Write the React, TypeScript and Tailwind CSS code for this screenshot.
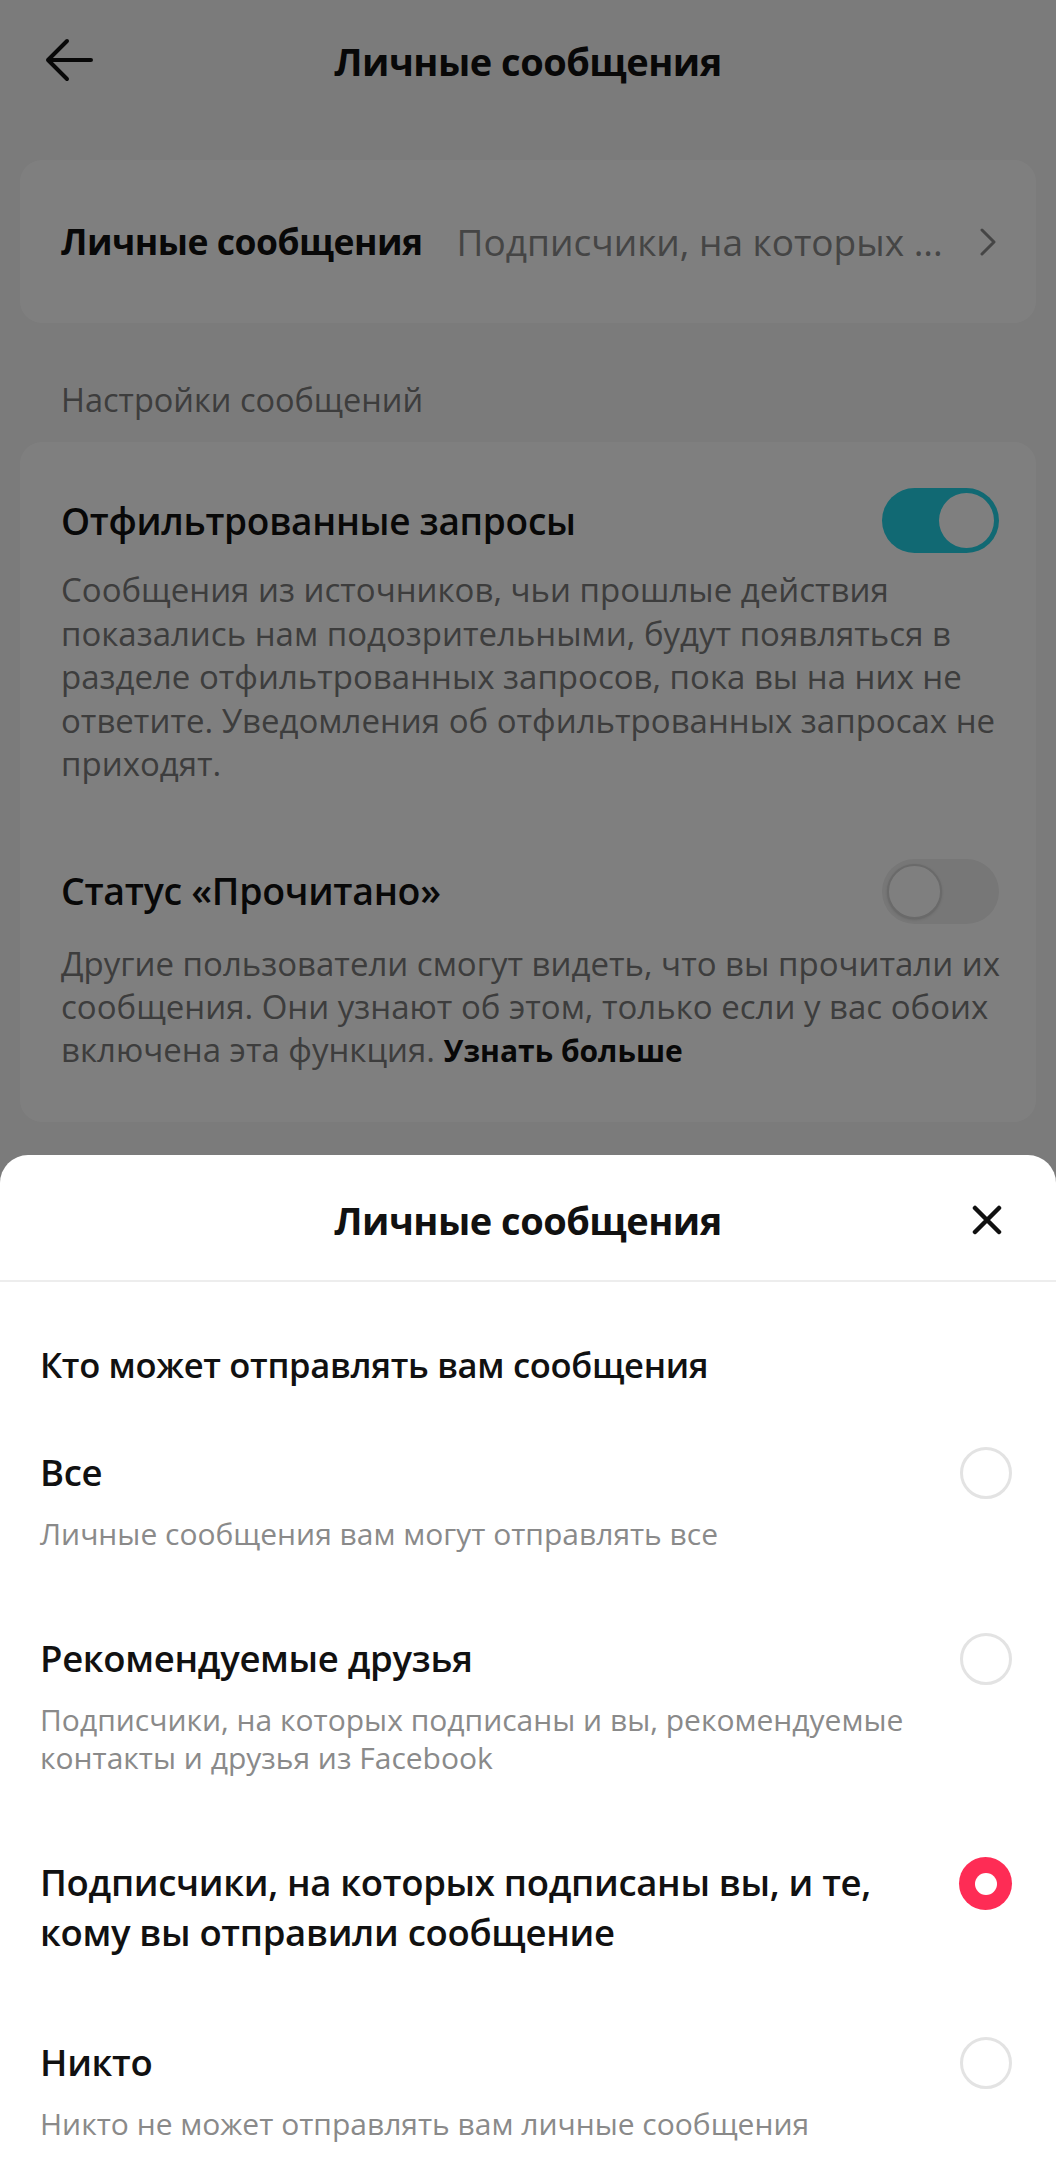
import React from 'react';

const font = { fontFamily: '"Open Sans", Roboto, "Noto Sans", sans-serif' };

const options = [
  {
    title: 'Все',
    desc: 'Личные сообщения вам могут отправлять все',
    selected: false,
  },
  {
    title: 'Рекомендуемые друзья',
    desc: 'Подписчики, на которых подписаны и вы, рекомендуемые контакты и друзья из Facebook',
    selected: false,
  },
  {
    title: 'Подписчики, на которых подписаны вы, и те, кому вы отправили сообщение',
    desc: '',
    selected: true,
  },
  {
    title: 'Никто',
    desc: 'Никто не может отправлять вам личные сообщения',
    selected: false,
  },
];

function Toggle({ on }: { on: boolean }) {
  return (
    <div
      className={`flex h-[65px] w-[117px] shrink-0 items-center rounded-full p-[5px] ${
        on ? 'justify-end bg-[#22d3e6]' : 'justify-start bg-[#eeeeee]'
      }`}
    >
      <div
        className={`h-[55px] w-[55px] rounded-full bg-white ${
          on ? '' : 'border-2 border-[#d4d4d4] shadow-sm'
        }`}
      />
    </div>
  );
}

function Radio({ selected }: { selected: boolean }) {
  if (selected) {
    return (
      <div className="flex h-[53px] w-[53px] shrink-0 items-center justify-center rounded-full bg-[#fe2c55]">
        <div className="h-[22px] w-[22px] rounded-full bg-white" />
      </div>
    );
  }
  return <div className="h-[52px] w-[52px] shrink-0 rounded-full border-[3px] border-[#e3e3e3]" />;
}

export default function App() {
  return (
    <div className="relative h-[2179px] w-[1056px] overflow-hidden bg-[#f6f6f6]" style={font}>
      {/* Background settings page */}
      <div className="relative flex h-[122px] items-center justify-center">
        <svg
          className="absolute left-[44px] top-[38px]"
          width="50"
          height="44"
          viewBox="0 0 50 44"
          fill="none"
          stroke="#111"
          strokeWidth="4"
          strokeLinecap="round"
          strokeLinejoin="round"
        >
          <path d="M47 22H4M23 3L4 22l19 19" />
        </svg>
        <h1 className="text-[38px] font-bold tracking-[-0.5px] text-[#111]">Личные сообщения</h1>
      </div>

      <div className="mx-[20px] mt-[38px] flex h-[163px] items-center rounded-[22px] bg-white px-[41px]">
        <span className="whitespace-nowrap text-[35.5px] font-bold tracking-[-0.5px] text-[#111]">Личные сообщения</span>
        <span className="ml-[34px] flex-1 truncate text-[37px] text-[#8a8a8a]">Подписчики, на которых ...</span>
        <svg
          width="18"
          height="30"
          viewBox="0 0 18 30"
          fill="none"
          stroke="#8a8a8a"
          strokeWidth="3"
          strokeLinecap="round"
          strokeLinejoin="round"
          className="ml-[16px] mr-[-2px] shrink-0"
        >
          <path d="M3 3l12 12L3 27" />
        </svg>
      </div>

      <div className="mt-[57px] px-[61px] text-[32.5px] leading-[40px] text-[#7a7a7a]">Настройки сообщений</div>

      <div className="mx-[20px] mt-[22px] rounded-[22px] bg-white pl-[41px] pr-[33px] pt-[46px] pb-[50px]">
        <div className="flex items-center justify-between">
          <span className="text-[37px] font-semibold tracking-[-0.3px] text-[#111]">Отфильтрованные запросы</span>
          <div className="mr-[4px]">
            <Toggle on />
          </div>
        </div>
        <p className="mt-[15px] text-[33px] leading-[43.5px] text-[#7a7a7a]">
          Сообщения из источников, чьи прошлые действия показались нам подозрительными, будут появляться в
          разделе отфильтрованных запросов, пока вы на них не ответите. Уведомления об отфильтрованных
          запросах не приходят.
        </p>

        <div className="mt-[73px] flex items-center justify-between">
          <span className="text-[37.5px] font-semibold tracking-[-0.3px] text-[#111]">Статус «Прочитано»</span>
          <div className="mr-[4px]">
            <Toggle on={false} />
          </div>
        </div>
        <p className="mt-[18px] text-[33px] leading-[43px] text-[#7a7a7a]">
          Другие пользователи смогут видеть, что вы прочитали их сообщения. Они узнают об этом, только если у
          вас обоих включена эта функция. <span className="text-[30px] font-bold text-[#111]">Узнать больше</span>
        </p>
      </div>

      {/* Dim overlay */}
      <div className="absolute inset-0 bg-black/50" />

      {/* Bottom sheet */}
      <div className="absolute bottom-0 left-0 right-0 h-[1024px] rounded-t-[28px] bg-white">
        <div className="relative flex h-[127px] items-center justify-center border-b-2 border-[#ededed] pt-[6px]">
          <h2 className="text-[38px] font-bold tracking-[-0.5px] text-[#111]">Личные сообщения</h2>
          <svg
            className="absolute right-[54px] top-[50px]"
            width="30"
            height="30"
            viewBox="0 0 30 30"
            stroke="#111"
            strokeWidth="4.5"
            strokeLinecap="round"
          >
            <path d="M3 3l24 24M27 3L3 27" />
          </svg>
        </div>

        <div className="px-[40px] pt-[63px]">
          <div className="text-[34.5px] font-semibold leading-[40px] tracking-[-0.3px] text-[#111]">
            Кто может отправлять вам сообщения
          </div>

          <div className="mt-[62px] flex flex-col gap-[80px]">
            {options.map((o, i) => (
              <div key={i} className="flex items-start justify-between gap-[40px]">
                <div className="flex-1">
                  <div className="text-[36.5px] font-semibold leading-[50px] tracking-[-0.3px] text-[#111]">{o.title}</div>
                  {o.desc && (
                    <div className="mt-[18px] text-[30px] leading-[38px] text-[#8a8a8a]">{o.desc}</div>
                  )}
                </div>
                <div className="mr-[4px]">
                  <Radio selected={o.selected} />
                </div>
              </div>
            ))}
          </div>
        </div>
      </div>
    </div>
  );
}
